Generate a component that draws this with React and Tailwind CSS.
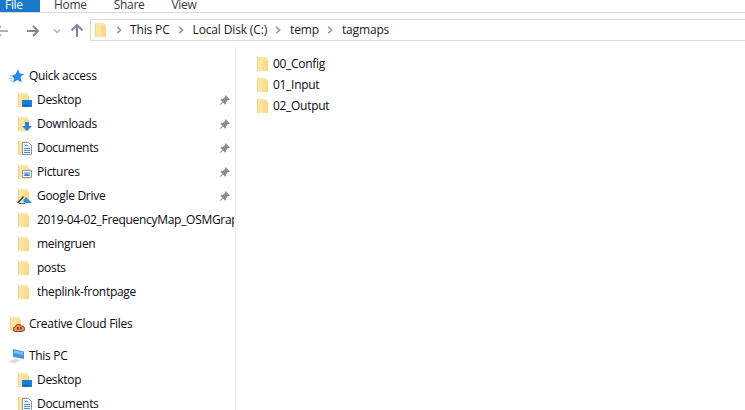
const FONT = "font-['Open_Sans','Noto_Sans',sans-serif] tracking-[-0.3px]";

// little yellow explorer folder, pale back with a deeper front flap on the right
function Folder({ className = "" }) {
  return (
    <svg width="11" height="14" viewBox="0 0 11 14" className={className}>
      <path d="M0 0h9v1h1v13H0z" fill="#fae4a8" />
      <path d="M0 0h1v14H0z" fill="#f0d48c" />
      <path d="M6 3l4-2v13H6z" fill="#fcdc86" />
      <path d="M10 3h1v11h-1z" fill="#f7d77f" />
    </svg>
  );
}

function Overlay({ kind }) {
  if (kind === "desktop") {
    return (
      <svg width="10" height="7" viewBox="0 0 10 7" className="absolute left-[4px] top-[7px]">
        <path d="M0 0h10v7H0z" fill="#1580d8" />
        <path d="M1 5h6v1H1z" fill="#0b5aa5" />
      </svg>
    );
  }
  if (kind === "downloads") {
    return (
      <svg width="10" height="9" viewBox="0 0 10 9" className="absolute left-[4px] top-[5px]">
        <path d="M3 0h4v4h3L5 9 0 4h3z" fill="#2f82d6" />
      </svg>
    );
  }
  if (kind === "documents") {
    return (
      <svg width="10" height="13" viewBox="0 0 10 13" className="absolute left-[4px] top-[1px]">
        <path d="M.5.5h6l3 3v9H.5z" fill="#f4f7fa" stroke="#8c9bab" />
        <path d="M3 3h3v1H3zM2 6h6v1H2zM2 8h6v1H2zM2 10h6v1H2z" fill="#4a90d0" />
      </svg>
    );
  }
  if (kind === "pictures") {
    return (
      <svg width="10" height="8" viewBox="0 0 10 8" className="absolute left-[4px] top-[5px]">
        <path d="M.5.500h9v7h-9z" fill="#f2f6f9" stroke="#8c9bab" />
        <path d="M2 2h6v3H2z" fill="#9cc6e6" />
        <path d="M2 6l2-3 2 2 1-1 1 2z" fill="#3f7fb8" />
      </svg>
    );
  }
  if (kind === "drive") {
    return (
      <svg width="15" height="8" viewBox="0 0 15 8" className="absolute left-[-1px] top-[7px]">
        <path d="M9 1l6 6H8L6 5z" fill="#2f8fe0" />
        <path d="M0 7l2 0 5-6-1-1z" fill="#2b3a55" />
        <path d="M2 8h6V7H2z" fill="#54657f" />
      </svg>
    );
  }
  return null;
}

function QuickStar() {
  return (
    <svg width="15" height="14" viewBox="0 0 15 14">
      <path d="M9 0l1.600 4.300L15 5l-3.500 3 1.200 5.500L8.500 11 4 13.500l1-4.300-2.500-2.700 4-1.200z" fill="#2a8be6" />
      <path d="M1 6.500h3M0 9.500h3.500M1 12h3" stroke="#93c5f0" strokeWidth="1" />
    </svg>
  );
}

function Pin() {
  return (
    <svg width="11" height="11" viewBox="0 0 11 11">
      <path d="M6.500 0L11 4.500l-1.200.6-1 0L7 7.500 7.200 9 6 9.600 1.500 5 2 3.800 3.600 4 6 2.200V1z" fill="#8a8f96" />
      <path d="M3 7L.3 10.700 4 8z" fill="#8a8f96" />
    </svg>
  );
}

function Chevron() {
  return (
    <svg width="6" height="8" viewBox="0 0 6 8" className="shrink-0">
      <path d="M1.200 0.800L4.600 4 1.200 7.200" fill="none" stroke="#8f99a6" strokeWidth="1.700" />
    </svg>
  );
}

function NavItem({ label, kind, pinned }) {
  return (
    <div className="flex h-6 items-center pl-[18px] pr-px">
      <div className="relative h-[14px] w-[14px] shrink-0">
        <Folder />
        <Overlay kind={kind} />
      </div>
      <span className="ml-[5px] min-w-0 flex-1 overflow-hidden whitespace-nowrap text-[12px] text-[#0a0a14]">{label}</span>
      {pinned && (
        <span className="ml-1 mr-[4px] flex shrink-0">
          <Pin />
        </span>
      )}
    </div>
  );
}

function ContentItem({ label }) {
  return (
    <div className="flex h-[21px] items-center">
      <Folder />
      <span className="ml-[5px] text-[12px] text-[#0a0a14]">{label}</span>
    </div>
  );
}

export default function App() {
  return (
    <div className={`flex h-[410px] w-[745px] flex-col overflow-hidden bg-white ${FONT}`}>
      {/* ribbon tabs, cut off by the top of the picture */}
      <div className="flex h-[13px] shrink-0 items-end overflow-hidden border-b border-[#dadbdc] text-[12px] text-[#3a3a3a]">
        <div className="flex h-full w-10 items-end bg-[#1979ca] pl-[5px] text-white">
          <span className="mb-[-1px] leading-4">File</span>
        </div>
        <span className="mb-[-1px] ml-[14px] leading-4">Home</span>
        <span className="mb-[-1px] ml-[27px] leading-4">Share</span>
        <span className="mb-[-1px] ml-[27px] leading-4">View</span>
      </div>

      {/* nav buttons + address bar */}
      <div className="flex h-[33px] shrink-0 items-center">
        <svg width="90" height="16" viewBox="0 0 90 16" className="mt-[2px] shrink-0">
          <g fill="none" stroke="#a9b1bb" strokeWidth="2">
            <path d="M-2 8h10M1 3L-3 8l4 5" />
          </g>
          <g fill="none" stroke="#7e8b9c" strokeWidth="2">
            <path d="M27 8h11M33 3l5 5-5 5" />
          </g>
          <path d="M54 6.500l3 3 3-3" fill="none" stroke="#a9b1bb" strokeWidth="1.500" />
          <g fill="none" stroke="#7e8b9c" strokeWidth="2">
            <path d="M77 14V2M71.500 7.500L77 2l5.500 5.500" />
          </g>
        </svg>
        <div className="mt-[1px] flex h-[22px] flex-1 items-center border border-r-0 border-[#d9d9d9] pl-[4px] text-[12px] tracking-[-0.15px] text-[#1a1a1a]">
          <Folder />
          <span className="ml-[10px] flex items-center">
            <Chevron />
          </span>
          <span className="ml-[8px]">This PC</span>
          <span className="ml-[8px]"><Chevron /></span>
          <span className="ml-[9px]">Local Disk (C:)</span>
          <span className="ml-[8px]"><Chevron /></span>
          <span className="ml-[9px]">temp</span>
          <span className="ml-[8px]"><Chevron /></span>
          <span className="ml-[9px]">tagmaps</span>
        </div>
      </div>

      <div className="flex min-h-0 flex-1">
        {/* navigation pane */}
        <div className="w-[236px] shrink-0 overflow-hidden border-r border-[#f0f0f0] pt-[18px]">
          <div className="flex h-6 items-center pl-[9px]">
            <QuickStar />
            <span className="ml-[5px] text-[12px] text-[#0a0a14]">Quick access</span>
          </div>
          <NavItem label="Desktop" kind="desktop" pinned />
          <NavItem label="Downloads" kind="downloads" pinned />
          <NavItem label="Documents" kind="documents" pinned />
          <NavItem label="Pictures" kind="pictures" pinned />
          <NavItem label="Google Drive" kind="drive" pinned />
          <NavItem label="2019-04-02_FrequencyMap_OSMGraphTool" />
          <NavItem label="meingruen" />
          <NavItem label="posts" />
          <NavItem label="theplink-frontpage" />

          <div className="mt-2 flex h-6 items-center pl-[10px]">
            <div className="relative h-[14px] w-[15px] shrink-0">
              <Folder />
              <svg width="12" height="9" viewBox="0 0 12 9" className="absolute left-[3px] top-[6px]">
                <path d="M2.500 8.500a2.200 2.200 0 0 1-.4-4.400A3.500 3.500 0 0 1 8.500 3a2.800 2.800 0 0 1 1 5.500z" fill="#e8935f" stroke="#9a3f22" strokeWidth="1" />
                <path d="M4 4h1.500v2.500H4zM7 4h1.500v2.500H7z" fill="#7a3018" />
              </svg>
            </div>
            <span className="ml-[4px] text-[12px] text-[#0a0a14]">Creative Cloud Files</span>
          </div>

          <div className="mt-2 flex h-6 items-center pl-[8px]">
            <svg width="17" height="16" viewBox="0 0 17 16" className="shrink-0">
              <path d="M5 1l11 2.500V11L5 9z" fill="#3f97dc" />
              <path d="M6 2.200l9 2V7L6 5z" fill="#7cc0ee" />
              <path d="M0 14l7-3 6 1-6 3z" fill="#d7dbdf" />
            </svg>
            <span className="ml-[4px] text-[12px] text-[#0a0a14]">This PC</span>
          </div>
          <NavItem label="Desktop" kind="desktop" />
          <NavItem label="Documents" kind="documents" />
        </div>

        {/* folder contents */}
        <div className="flex-1 pl-[21px] pt-[7px]">
          <ContentItem label="00_Config" />
          <ContentItem label="01_Input" />
          <ContentItem label="02_Output" />
        </div>
      </div>
    </div>
  );
}
